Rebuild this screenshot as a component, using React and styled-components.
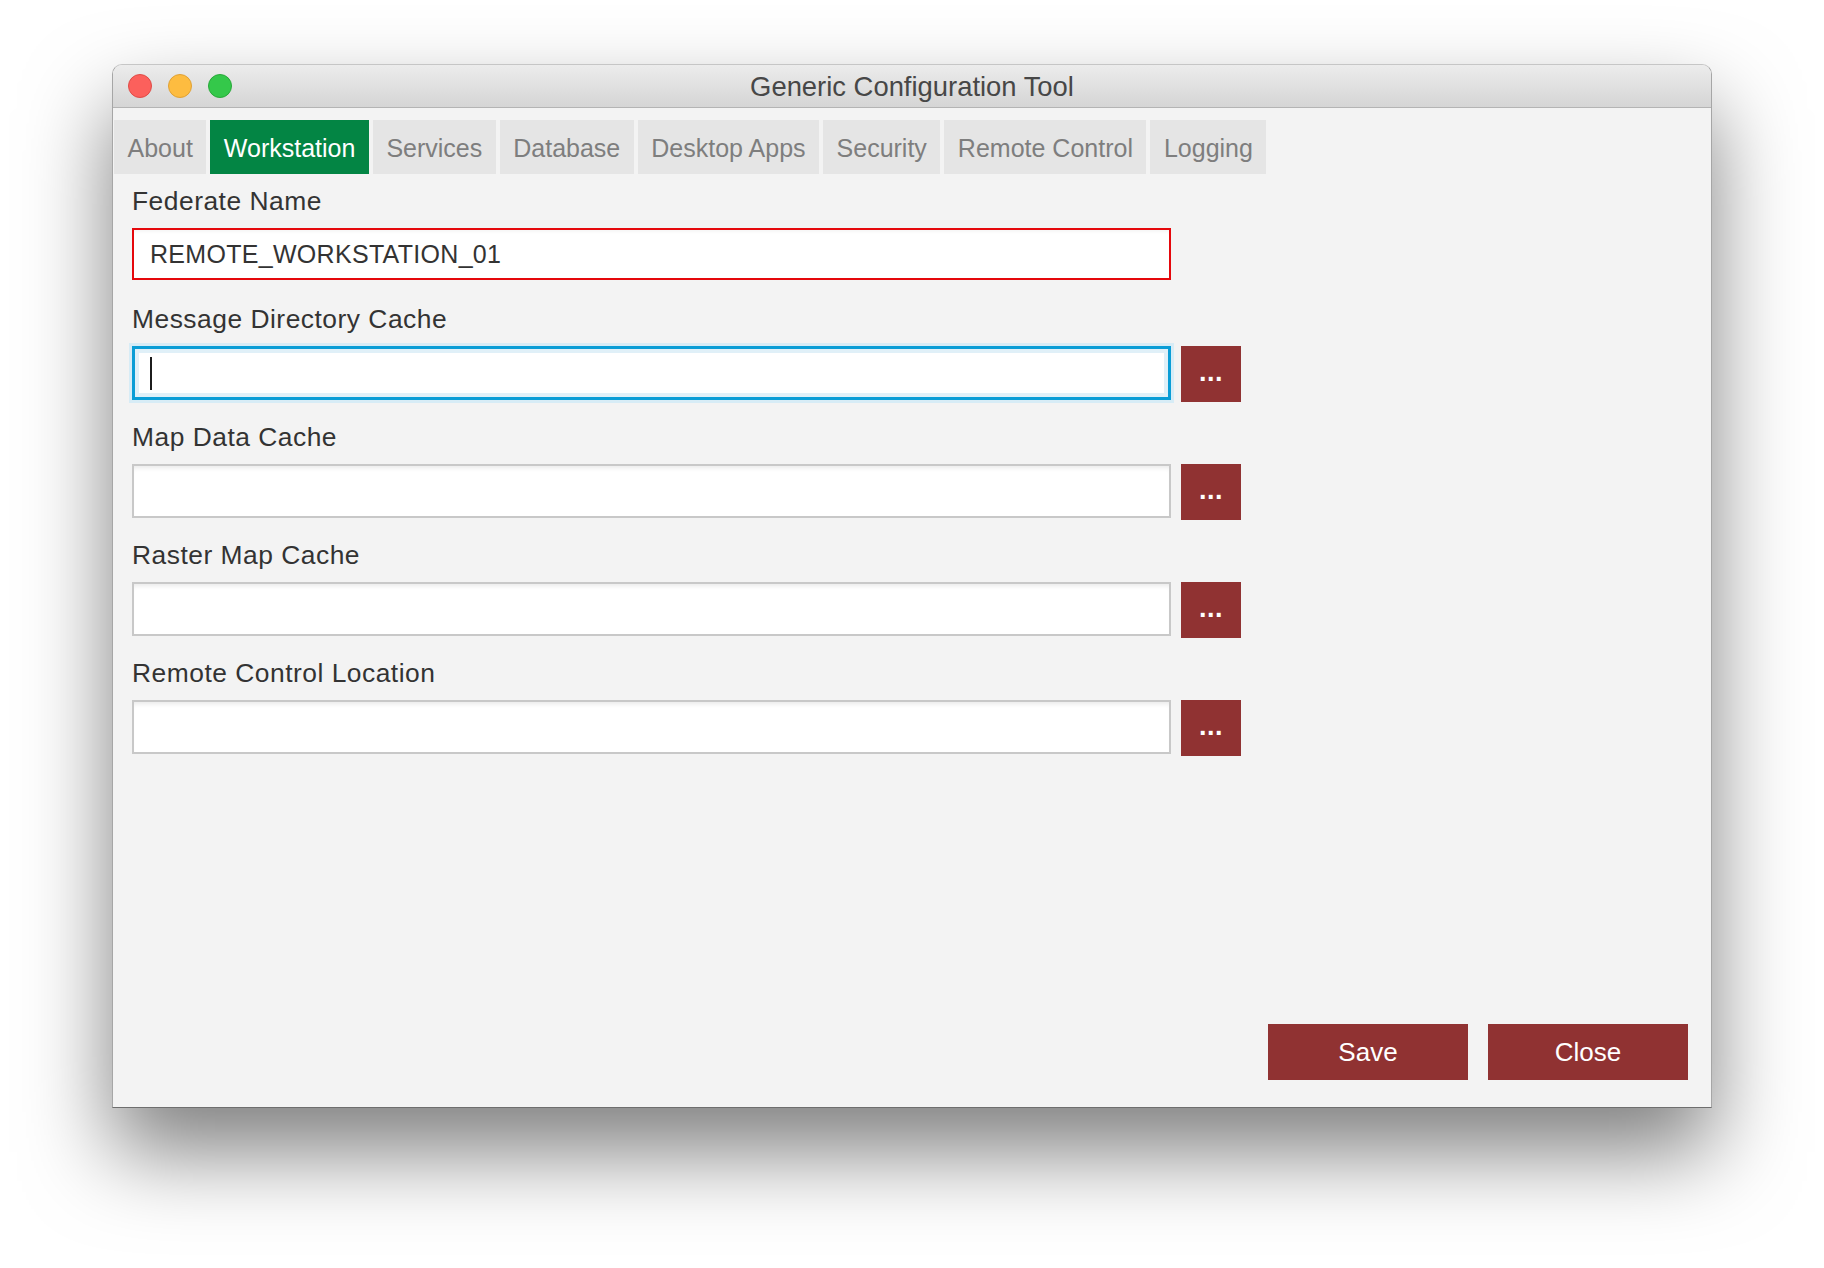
import React from 'react';
import styled, { createGlobalStyle } from 'styled-components';

const GlobalStyle = createGlobalStyle`
  html, body {
    margin: 0;
    padding: 0;
    background: #ffffff;
  }
  body {
    font-family: "Liberation Sans", Arial, sans-serif;
  }
`;

const Desktop = styled.div`
  width: 1824px;
  height: 1268px;
  padding: 64px 0 0 112px;
  box-sizing: border-box;
  overflow: hidden;
`;

const Window = styled.div`
  width: 1600px;
  height: 1044px;
  box-sizing: border-box;
  display: flex;
  flex-direction: column;
  background: #f3f3f3;
  border: 1px solid #a6a6a6;
  border-top-color: #c6c6c6;
  border-bottom-color: #6e6e6e;
  border-radius: 10px 10px 0 0;
  box-shadow: 0 44px 86px rgba(0, 0, 0, 0.5);
  overflow: hidden;
`;

const TitleBar = styled.div`
  height: 43px;
  flex-shrink: 0;
  box-sizing: border-box;
  display: grid;
  grid-template-columns: 1fr auto 1fr;
  align-items: center;
  padding: 0 15px;
  background: linear-gradient(#ececec, #d5d5d5);
  border-bottom: 1px solid #b4b4b4;
`;

const Lights = styled.div`
  display: flex;
  gap: 16px;
`;

const Light = styled.span`
  width: 24px;
  height: 24px;
  box-sizing: border-box;
  border-radius: 50%;
  background: ${p => p.$color};
  border: 1px solid ${p => p.$edge};
`;

const Title = styled.div`
  padding-top: 2px;
  font-size: 27.4px;
  color: #474747;
  white-space: nowrap;
`;

const TabBar = styled.div`
  display: flex;
  gap: 4px;
  margin-top: 12px;
  padding: 0 1px;
`;

const Tab = styled.div`
  height: 54px;
  box-sizing: border-box;
  display: flex;
  align-items: center;
  padding: 2px 13.5px 0;
  font-size: 25px;
  white-space: nowrap;
  color: ${p => (p.$active ? '#ffffff' : '#7e7e7e')};
  background: ${p => (p.$active ? '#038544' : '#e5e5e5')};
`;

const Form = styled.div`
  display: flex;
  flex-direction: column;
  gap: 20px;
  padding: 12px 0 0 19px;
`;

const Field = styled.div`
  display: flex;
  flex-direction: column;
  gap: 12px;
`;

const Label = styled.label`
  font-size: 26.4px;
  line-height: 30px;
  letter-spacing: 0.5px;
  color: #333333;
`;

const Row = styled.div`
  display: flex;
  align-items: flex-start;
  gap: 10px;
  height: 56px;
`;

const borders = {
  invalid: '2px solid #e5080c',
  focused: '3px solid #0a9dd6',
  normal: '2px solid #c8c8c8',
};

const shadows = {
  invalid: 'inset 0 4px 4px -3px rgba(0, 0, 0, 0.06)',
  focused: '0 0 0 3px #d7ecf6, inset 0 0 0 4px #e0f0f8',
  normal: 'inset 0 5px 5px -3px rgba(0, 0, 0, 0.09)',
};

const TextBox = styled.div`
  width: 1039px;
  height: ${p => (p.$state === 'invalid' ? 52 : 54)}px;
  box-sizing: border-box;
  display: flex;
  align-items: center;
  padding: 0 ${p => (p.$state === 'focused' ? 15 : 16)}px;
  background: #ffffff;
  border: ${p => borders[p.$state]};
  box-shadow: ${p => shadows[p.$state]};
`;

const Caret = styled.span`
  width: 2px;
  height: 33px;
  flex-shrink: 0;
  background: #1c1c1c;
`;

const Input = styled.input`
  flex: 1;
  min-width: 0;
  border: none;
  outline: none;
  padding: 0;
  background: transparent;
  font-family: "Liberation Sans", Arial, sans-serif;
  font-size: 25px;
  letter-spacing: 0.3px;
  color: #333333;
`;

const BrowseButton = styled.button`
  width: 60px;
  height: 56px;
  flex-shrink: 0;
  display: flex;
  align-items: center;
  justify-content: center;
  padding: 0 0 3px;
  border: none;
  background: #903232;
  color: #ffffff;
  font-family: "Liberation Sans", Arial, sans-serif;
  font-size: 27px;
  font-weight: bold;
  letter-spacing: 0.5px;
  line-height: 1;
`;

const Footer = styled.div`
  margin-top: auto;
  display: flex;
  justify-content: flex-end;
  gap: 20px;
  padding: 0 23px 27px 0;
`;

const ActionButton = styled.button`
  width: 200px;
  height: 56px;
  border: none;
  padding: 0;
  background: #903232;
  color: #ffffff;
  font-family: "Liberation Sans", Arial, sans-serif;
  font-size: 26px;
`;

const tabs = [
  'About',
  'Workstation',
  'Services',
  'Database',
  'Desktop Apps',
  'Security',
  'Remote Control',
  'Logging',
];

const fields = [
  { label: 'Federate Name', value: 'REMOTE_WORKSTATION_01', state: 'invalid', browse: false },
  { label: 'Message Directory Cache', value: '', state: 'focused', browse: true },
  { label: 'Map Data Cache', value: '', state: 'normal', browse: true },
  { label: 'Raster Map Cache', value: '', state: 'normal', browse: true },
  { label: 'Remote Control Location', value: '', state: 'normal', browse: true },
];

export default function App() {
  return (
    <Desktop>
      <GlobalStyle />
      <Window>
        <TitleBar>
          <Lights>
            <Light $color="#fc605c" $edge="#de4c47" />
            <Light $color="#fdbc40" $edge="#dfa135" />
            <Light $color="#34c84a" $edge="#29a83a" />
          </Lights>
          <Title>Generic Configuration Tool</Title>
        </TitleBar>

        <TabBar>
          {tabs.map(t => (
            <Tab key={t} $active={t === 'Workstation'}>
              {t}
            </Tab>
          ))}
        </TabBar>

        <Form>
          {fields.map(f => (
            <Field key={f.label}>
              <Label>{f.label}</Label>
              <Row>
                <TextBox $state={f.state}>
                  {f.state === 'focused' && <Caret />}
                  <Input readOnly value={f.value} />
                </TextBox>
                {f.browse && <BrowseButton>...</BrowseButton>}
              </Row>
            </Field>
          ))}
        </Form>

        <Footer>
          <ActionButton>Save</ActionButton>
          <ActionButton>Close</ActionButton>
        </Footer>
      </Window>
    </Desktop>
  );
}
